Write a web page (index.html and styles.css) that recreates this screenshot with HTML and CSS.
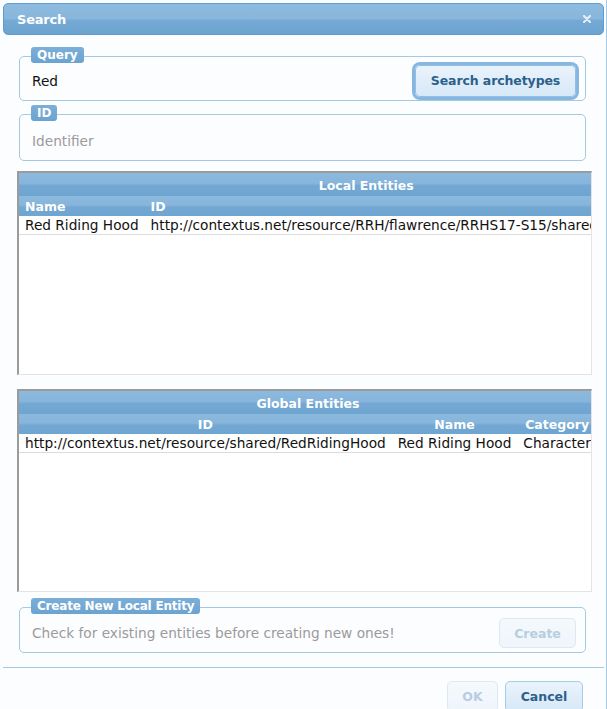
FILE: index.html
```html
<!DOCTYPE html>
<html>
<head>
<meta charset="utf-8">
<link rel="stylesheet" href="styles.css">
</head>
<body>
<div class="dialog">
  <div class="titlebar">
    <span class="title">Search</span>
    <svg class="close" width="8" height="8" viewBox="0 0 8 8"><path d="M1 1 L7 7 M7 1 L1 7" stroke="#e4eef7" stroke-width="2.2" stroke-linecap="round"/></svg>
  </div>
  <div class="content">
    <div class="group group-query">
      <span class="legend">Query</span>
      <div class="field">Red</div>
      <button class="btn btn-focus">Search archetypes</button>
    </div>
    <div class="group group-id">
      <span class="legend">ID</span>
      <div class="field placeholder">Identifier</div>
    </div>
    <div class="grid">
      <table class="tbl tbl-local">
        <thead>
          <tr class="hrow h1"><th colspan="2">Local Entities</th></tr>
          <tr class="hrow h2"><th class="left">Name</th><th class="left">ID</th></tr>
        </thead>
        <tbody>
          <tr class="drow"><td>Red Riding Hood</td><td>http://contextus.net/resource/RRH/flawrence/RRHS17-S15/shared/RedRidingHood</td></tr>
        </tbody>
      </table>
    </div>
    <div class="grid grid-global">
      <table class="tbl tbl-global">
        <thead>
          <tr class="hrow h1"><th colspan="3">Global Entities</th></tr>
          <tr class="hrow h2"><th>ID</th><th>Name</th><th>Category</th></tr>
        </thead>
        <tbody>
          <tr class="drow"><td>http://contextus.net/resource/shared/RedRidingHood</td><td>Red Riding Hood</td><td>Character</td></tr>
        </tbody>
      </table>
    </div>
    <div class="group group-create">
      <span class="legend legend-wide">Create New Local Entity</span>
      <div class="field placeholder">Check for existing entities before creating new ones!</div>
      <button class="btn btn-disabled btn-create">Create</button>
    </div>
  </div>
  <div class="footer">
    <button class="btn btn-disabled btn-ok">OK</button>
    <button class="btn btn-cancel">Cancel</button>
  </div>
</div>
</body>
</html>
```
FILE: styles.css
```css
html, body {
  margin: 0;
  padding: 0;
  background: #fcfdfe;
}
body {
  font-family: "DejaVu Sans", Verdana, sans-serif;
  font-size: 13.7px;
  color: #222;
}
.dialog {
  width: 607px;
  height: 709px;
  overflow: hidden;
  box-sizing: border-box;
  padding: 3px 2px 0 3px;
  border-right: 1px solid #a6c9e2;
  background: #fcfdfe;
}
.titlebar {
  height: 32px;
  box-sizing: border-box;
  border: 1px solid #5e9dd0;
  border-radius: 5px;
  background: linear-gradient(to bottom, #8ebbdf 0%, #88b6dc 48%, #74a9d4 56%, #6ca3cf 100%);
  display: flex;
  align-items: center;
  justify-content: space-between;
  padding: 0 12px 0 13px;
}
.title {
  color: #fff;
  font-weight: bold;
  font-size: 13px;
  letter-spacing: -0.2px;
}
.close {
  display: block;
  margin-top: -1px;
}
.content {
  padding: 21px 0 0 14px;
}
.group {
  position: relative;
  width: 567px;
  margin-left: 2px;
  box-sizing: border-box;
  border: 1px solid #a6c9e2;
  border-radius: 5px;
  display: flex;
  align-items: center;
  justify-content: space-between;
}
.legend {
  position: absolute;
  top: -10px;
  left: 11px;
  height: 16px;
  line-height: 16px;
  padding: 0 6px;
  border-radius: 3px;
  background: linear-gradient(to bottom, #7cafd8, #6ba3d0);
  color: #fff;
  font-weight: bold;
  font-size: 12px;
}
.legend-wide {
  letter-spacing: -0.2px;
}
.group-query {
  height: 45px;
  padding: 4px 9px 0 12px;
}
.group-id {
  height: 47px;
  margin-top: 13px;
  padding: 6px 9px 0 12px;
}
.group-create {
  height: 46px;
  margin-top: 15px;
  padding: 6px 9px 0 12px;
}
.field {
  color: #111;
}
.placeholder {
  color: #9b9b9b;
}
.btn {
  font-family: "DejaVu Sans", Verdana, sans-serif;
  font-weight: bold;
  font-size: 12.5px;
  color: #2d5f8b;
  border: 1px solid #a9cae5;
  border-radius: 5px;
  background: linear-gradient(to bottom, #e9f3fc, #d7e8f7);
  padding: 0;
  margin: 0;
}
.btn-focus {
  width: 161px;
  height: 32px;
  border-color: #93bde2;
  box-shadow: 0 0 0 3px #86b7e1;
  letter-spacing: -0.1px;
}
.btn-disabled {
  color: #b7cde0;
  border-color: #dce9f3;
  background: linear-gradient(to bottom, #f5f9fd, #eef5fb);
}
.btn-create {
  width: 77px;
  height: 30px;
}
.grid {
  width: 575px;
  height: 204px;
  margin-top: 10px;
  box-sizing: border-box;
  border-top: 2px solid #9b9b9b;
  border-left: 2px solid #9b9b9b;
  border-right: 1px solid #e4e4e4;
  border-bottom: 1px solid #e4e4e4;
  background: #fff;
  overflow: hidden;
}
.grid-global {
  margin-top: 14px;
  height: 203px;
}
.tbl {
  border-collapse: collapse;
  white-space: nowrap;
}
.hrow th {
  color: #fff;
  font-weight: bold;
  font-size: 12.5px;
  padding: 0 6px;
  text-align: center;
  background: linear-gradient(to bottom, #8cb9de 0%, #87b5db 45%, #73a8d3 55%, #6ea5d1 100%);
}
.hrow th.left {
  text-align: left;
}
.h1 th {
  height: 22px;
  padding-top: 1px;
}
.h2 th {
  height: 20px;
}
.drow td {
  height: 18px;
  padding: 0 6px;
  border-bottom: 1px solid #dcdcdc;
  color: #111;
}
.footer {
  margin-top: 14px;
  border-top: 1px solid #a6c9e2;
  padding: 13px 21px 0 0;
  display: flex;
  justify-content: flex-end;
  gap: 7px;
}
.btn-ok {
  width: 51px;
  height: 31px;
}
.btn-cancel {
  width: 78px;
  height: 31px;
}
```
